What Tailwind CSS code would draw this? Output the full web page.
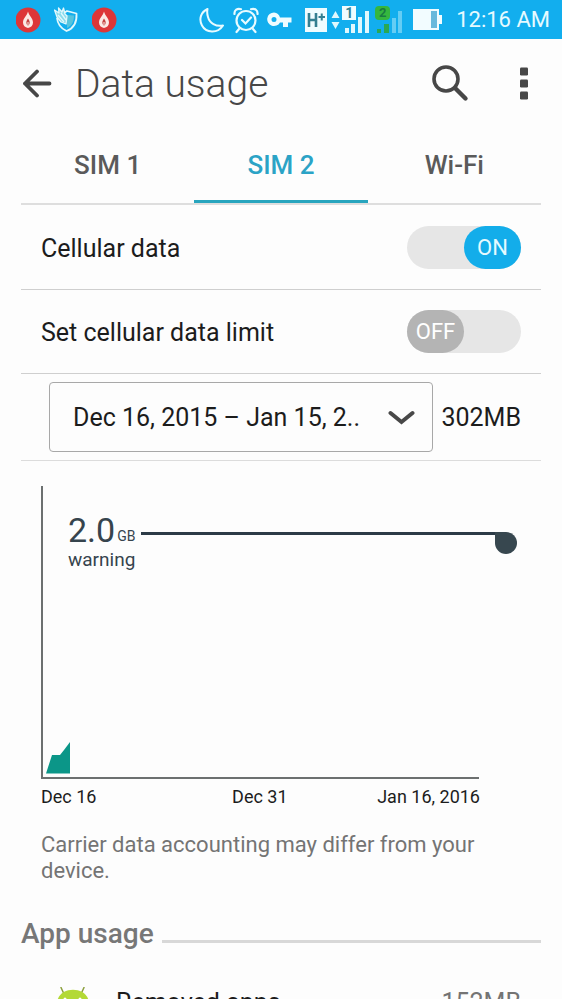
<!DOCTYPE html>
<html lang="en">
<head>
<meta charset="utf-8">
<meta name="viewport" content="width=device-width, initial-scale=1">
<title>Data usage</title>
<script src="https://cdn.jsdelivr.net/npm/@tailwindcss/browser@4"></script>
</head>
<body class="flex h-screen flex-col overflow-hidden bg-[#fdfdfd] font-[Roboto,sans-serif] text-[#1c1c1c]">
  <!-- Status bar -->
  <div class="flex h-[39px] shrink-0 items-center justify-between bg-[#12aeee] pr-3 pl-4">
    <div class="flex items-center gap-3">
      <svg class="size-[26px]" viewBox="0 0 26 26" aria-hidden="true"><circle cx="12" cy="13" r="12.5" fill="#dd3638"/><path d="M12 4.500C13 9 17 11 17 15.500C17 18.500 15 20.500 12 21C9 20.500 7 18.500 7 15.500C7 11 11 9 12 4.500Z" fill="#fbe9e4"/><path d="M12 11.500C13.500 13.500 14 15 13.500 16.500C13 18 12.500 18.500 12 19C11.500 18.500 11 18 10.500 16.500C10 15 10.500 13.500 12 11.500Z" fill="#c4423f"/><path d="M12 15v5" stroke="#fbe9e4" stroke-width="1"/></svg>
      <svg class="size-[26px]" viewBox="0 0 26 26" fill="none" stroke="#e2f8fc" stroke-width="1.800" stroke-linejoin="round" aria-hidden="true"><path d="M9 6.500L13 4L22.500 6.500C23 14 20.500 21 12.500 24C6 21 3.500 16 3 11"/><path d="M13 8V21C17.500 19 20 15 20 8.500Z" fill="#58c4dc" stroke="none"/><path d="M3 10L0.500 3L5 6L4.500 1L8 5L9.500 1L11 7L13 9L12 17L7 15Z" fill="#8bdcec" stroke-width="1.300"/><path d="M4 8L10 15M7 6L12 13" stroke-width="1.300"/></svg>
      <svg class="size-[26px]" viewBox="0 0 26 26" aria-hidden="true"><circle cx="12" cy="13" r="12.500" fill="#dd3638"/><path d="M12 4.500C13 9 17 11 17 15.500C17 18.500 15 20.500 12 21C9 20.500 7 18.500 7 15.500C7 11 11 9 12 4.500Z" fill="#fbe9e4"/><path d="M12 11.500C13.500 13.500 14 15 13.500 16.500C13 18 12.500 18.500 12 19C11.500 18.500 11 18 10.500 16.500C10 15 10.500 13.500 12 11.500Z" fill="#c4423f"/><path d="M12 15v5" stroke="#fbe9e4" stroke-width="1"/></svg>
    </div>
    <div class="flex items-center">
      <svg class="h-[30px] w-[28px]" viewBox="0 0 28 30" fill="none" stroke="#e8fbff" stroke-width="2" stroke-linejoin="round" aria-hidden="true"><path d="M8.500 4C2 7 -0.500 14 3 20.500C7 28 18.500 29 24 20.500C17 22 10.500 18 9 12C8 9 8 6.500 8.500 4Z"/></svg>
      <svg class="ml-[6px] h-[28px] w-[26px]" viewBox="0 0 26 28" fill="none" stroke="#e8fbff" stroke-width="2.200" stroke-linecap="round" aria-hidden="true"><circle cx="13" cy="14.500" r="9.500"/><path d="M1.500 8C1 4 4.500 2 8 3.200M24.500 8C25 4 21.500 2 18 3.200M6 23L3.500 26M20 23L22.500 26M9 14L12.500 17.500L18 11.500"/></svg>
      <svg class="ml-2 h-[16px] w-[25px]" viewBox="0 0 25 16" aria-hidden="true"><path fill-rule="evenodd" d="M7 0.500A6.800 6.800 0 1 0 13 10.500H16V15H21V10.500H24.500V5.500H13A6.800 6.800 0 0 0 7 0.500ZM7 5A2.500 2.500 0 1 1 7 10A2.500 2.500 0 1 1 7 5Z" fill="#effcff"/></svg>
      <span class="ml-[13px] flex h-6 w-[22px] items-center justify-center bg-[#effcff] text-[#347f91]" role="img" aria-label="H+ network"><svg class="h-6 w-[22px]" viewBox="0 0 22 24" fill="none" stroke="currentColor" aria-hidden="true"><path d="M4 5V19M11 5V19M4 12H11" stroke-width="2.600"/><path d="M13.500 9H20M16.750 5.500V12.500" stroke-width="2"/></svg></span>
      <svg class="ml-1 h-[22px] w-[9px]" viewBox="0 0 9 22" fill="#dff8fd" aria-hidden="true"><path d="M4.500 2L8.500 9H0.500ZM4.500 20L8.500 13H0.500Z"/></svg>
      <span class="relative ml-[2px] h-[28px] w-[28px]">
        <svg class="size-full" viewBox="0 0 28 28" fill="#dff8fd" aria-hidden="true"><path d="M3 22H7V27H3ZM9 18H13V27H9ZM16 11H20V27H16ZM23 5H27V27H23Z"/></svg>
        <span class="absolute top-0 left-0 flex h-[14px] w-[14px] items-center justify-center bg-[#effcff] text-[14px] leading-[14px] font-bold text-[#347f91]">1</span>
      </span>
      <span class="relative ml-[5px] h-[28px] w-[28px]">
        <svg class="size-full" viewBox="0 0 28 28" aria-hidden="true"><path d="M2 23H6V27H2ZM9 18H14V27H9Z" fill="#2aa852"/><path d="M17 12H21V27H17ZM23 5H27V27H23Z" fill="#65cdf4"/></svg>
        <span class="absolute top-0 left-0 flex h-[14px] w-[15px] items-center justify-center rounded-sm bg-[#35b63e] text-[13px] leading-[14px] font-bold text-[#197b40]">2</span>
      </span>
      <svg class="ml-[10px] h-[21px] w-[29px]" viewBox="0 0 29 21" aria-hidden="true"><path d="M0 0H26V6H29V15H26V21H0Z" fill="#f2fcff"/><path d="M18 2H24V19H18Z" fill="#69b9dc"/></svg>
      <time class="ml-[14px] text-[22px] leading-6 text-[#e6faff]">12:16 AM</time>
    </div>
  </div>

  <header class="flex h-[89px] shrink-0 items-center pr-[33px] pl-[22px] text-[#474747]">
    <button type="button" aria-label="Back" class="mr-[23px]"><svg class="block h-[30px] w-[30px]" viewBox="0 0 30 30" fill="none" stroke="currentColor" stroke-width="3.800" stroke-linecap="round" stroke-linejoin="round"><path d="M27.500 14.500H3M15 2.500L3 14.500L15 26.500"/></svg></button>
    <h1 class="flex-1 text-[39px] leading-[44px] font-light">Data usage</h1>
    <button type="button" aria-label="Search" class="mr-[50px]"><svg class="block size-[38px]" viewBox="0 0 38 38" fill="none" stroke="currentColor" stroke-width="3.600" stroke-linecap="round"><circle cx="15" cy="14" r="12"/><path d="M24 23L34.500 33.500" stroke-width="4.400"/></svg></button>
    <button type="button" aria-label="More options"><svg class="block h-[34px] w-[10px]" viewBox="0 0 10 34" fill="currentColor"><rect x="1" y="0.500" width="8" height="8" rx="1.200"/><rect x="1" y="12.500" width="8" height="8" rx="1.200"/><rect x="1" y="24.500" width="8" height="8" rx="1.200"/></svg></button>
  </header>

  <main class="min-h-0 flex-1 overflow-y-auto px-[21px] [scrollbar-width:none]">
    <nav class="grid h-[77px] grid-cols-3 border-b-2 border-[#dedede] text-center text-[26px] leading-[70px] font-medium text-[#5a5a5a]">
      <a href="#sim1" class="pt-[2px]">SIM 1</a>
      <a href="#sim2" aria-current="page" class="border-b-3 border-[#28a5be] pt-[2px] text-[#2ba3c6]">SIM 2</a>
      <a href="#wifi" class="pt-[2px]">Wi-Fi</a>
    </nav>

    <div class="flex h-[85px] items-center justify-between border-b border-[#cfcfcf] px-5">
      <label for="cellular" class="pt-[3px] text-[25px] leading-8">Cellular data</label>
      <span class="grid h-[43px] w-[114px]">
        <input id="cellular" type="checkbox" role="switch" checked class="size-full appearance-none rounded-full bg-[#e6e6e6] [grid-area:1/1]">
        <span class="pointer-events-none flex w-[57px] items-center justify-center justify-self-end rounded-full bg-[#13adea] text-[22px] text-[#e6faff] [grid-area:1/1]" aria-hidden="true">ON</span>
      </span>
    </div>

    <div class="flex h-[84px] items-center justify-between border-b border-[#cfcfcf] px-5">
      <label for="limit" class="pt-[3px] text-[25px] leading-8">Set cellular data limit</label>
      <span class="grid h-[43px] w-[114px]">
        <input id="limit" type="checkbox" role="switch" class="size-full appearance-none rounded-full bg-[#e6e6e6] [grid-area:1/1]">
        <span class="pointer-events-none flex w-[57px] items-center justify-center rounded-full bg-[#b4b4b4] text-[22px] text-white [grid-area:1/1]" aria-hidden="true">OFF</span>
      </span>
    </div>

    <div class="flex h-[87px] items-center gap-2 border-b border-[#dcdcdc] pr-5 pl-7 text-[25px]">
      <div class="grid h-[70px] min-w-0 flex-1 items-center">
        <select aria-label="Usage cycle" class="size-full appearance-none rounded-[4px] border border-[#a8a8a8] bg-transparent pt-[2px] pr-[60px] pl-[23px] [grid-area:1/1]">
          <option>Dec 16, 2015 – Jan 15, 2..</option>
        </select>
        <svg class="pointer-events-none mr-[18px] h-4 w-7 justify-self-end [grid-area:1/1]" viewBox="0 0 28 16" fill="none" stroke="#484848" stroke-width="4" stroke-linecap="round" aria-hidden="true"><path d="M3.500 4L14.500 13L25.500 4"/></svg>
      </div>
      <output class="pt-[2px]">302MB</output>
    </div>

    <figure class="px-5 pt-[25px]">
      <div class="grid h-[293px]">
        <div class="mr-[42px] flex items-end border-b-2 border-l-2 border-[#6c7070] pb-[3px] pl-[3px] [grid-area:1/1]">
          <svg class="h-[32px] w-[24px]" viewBox="0 0 24 32" aria-hidden="true"><path d="M0 31.500L6 13H14L18 8L24 0V31.500Z" fill="#0b9688"/></svg>
        </div>
        <div class="mr-1 ml-[27px] pt-[26px] text-[#36444d] [grid-area:1/1]">
          <div class="flex h-9 items-start">
            <span class="text-[34px] leading-9">2.0</span>
            <span class="ml-[2px] pt-[16px] text-[14px] leading-4">GB</span>
            <span class="mt-5 ml-[6px] h-[3px] flex-1 bg-[#2c3b47]"></span>
            <span class="mt-5 size-[22px] rounded-full rounded-tl-none bg-[#37474f]"></span>
          </div>
          <p class="text-[19px] leading-6">warning</p>
        </div>
      </div>
      <div class="mr-[41px] flex justify-between pt-[6px] text-[18px] leading-6">
        <span>Dec 16</span><span class="pl-[46px]">Dec 31</span><span>Jan 16, 2016</span>
      </div>
      <figcaption class="pt-[23px] text-[22px] leading-[26px] text-[#747474]">Carrier data accounting may differ from your device.</figcaption>
    </figure>

    <section class="pt-[34px]">
      <div class="flex items-center gap-2">
        <h2 class="text-[28px] leading-8 font-medium text-[#777]">App usage</h2>
        <span class="mt-[14px] h-[3px] flex-1 bg-[#d8d8d8]"></span>
      </div>
      <div class="flex items-start pt-[37px] pr-5 pl-[31px] text-[25px] leading-8">
        <svg class="h-[44px] w-[40px]" viewBox="0 0 40 44" aria-hidden="true"><path d="M12 7L9 0.500M29 7L32 0.500" stroke="#8b9f3c" stroke-width="1.500" stroke-linecap="round"/><path d="M5 17C5 -2 37 -2 37 17Z" fill="#b3d936"/><circle cx="13" cy="12" r="1.500" fill="#fff"/><circle cx="28" cy="12" r="1.500" fill="#fff"/><path d="M5 19H37V35Q37 37 34 37H8Q5 37 5 35Z" fill="#a4c639"/></svg>
        <span class="ml-6 flex-1">Removed apps</span>
        <span class="text-[#747474]">152MB</span>
      </div>
    </section>
  </main>
</body>
</html>
